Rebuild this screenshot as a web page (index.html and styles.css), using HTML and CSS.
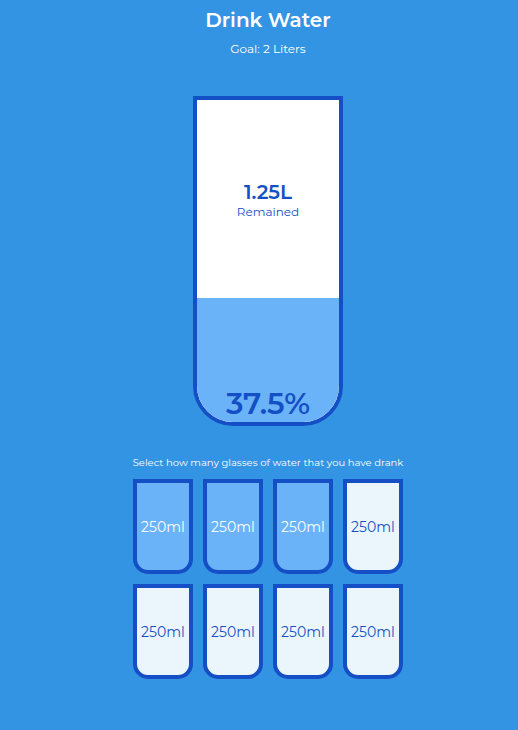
FILE: index.html
```html
<!DOCTYPE html>
<html lang="en">
<head>
<meta charset="UTF-8">
<meta name="viewport" content="width=device-width, initial-scale=1">
<title>Drink Water</title>
<link rel="stylesheet" href="styles.css">
</head>
<body>
<main class="tracker">
<h1 class="title">Drink Water</h1>
<h2 class="goal">Goal: 2 Liters</h2>
<section class="cup">
<div class="remained"><span class="liters">1.25L</span><small class="caption">Remained</small></div>
<div class="percentage">37.5%</div>
</section>
<p class="hint" id="hint">Select how many glasses of water that you have drank</p>
<div class="glasses" role="group" aria-labelledby="hint">
<button class="glass full" type="button">250ml</button>
<button class="glass full" type="button">250ml</button>
<button class="glass full" type="button">250ml</button>
<button class="glass" type="button">250ml</button>
<button class="glass" type="button">250ml</button>
<button class="glass" type="button">250ml</button>
<button class="glass" type="button">250ml</button>
<button class="glass" type="button">250ml</button>
</div>
</main>
</body>
</html>
```
FILE: styles.css
```css
:root {
  --border: #144fc6;
  --fill: #6ab3f8;
}

* {
  box-sizing: border-box;
}

body {
  margin: 0;
  background: #3494e4;
  color: #fff;
  font-family: Montserrat, Inter, sans-serif;
}

.tracker {
  display: flex;
  flex-direction: column;
  align-items: center;
  padding: 8px 0 50px 18px;
}

.title {
  margin: 0;
  font-size: 20px;
  line-height: 24px;
  font-weight: 600;
}

.goal {
  margin: 8px 0 38px;
  font-size: 12px;
  line-height: 18px;
  font-weight: 400;
}

.cup {
  display: flex;
  flex-direction: column;
  width: 150px;
  height: 330px;
  border: 4px solid var(--border);
  border-radius: 0 0 40px 40px;
  background: #fff;
  color: var(--border);
  overflow: hidden;
}

.remained {
  flex: 1;
  display: flex;
  flex-direction: column;
  align-items: center;
  justify-content: center;
  padding-top: 2px;
}

.liters {
  font-size: 20px;
  line-height: 24px;
  font-weight: 600;
}

.caption {
  font-size: 12px;
  line-height: 16px;
  font-weight: 400;
}

.percentage {
  display: flex;
  align-items: flex-end;
  justify-content: center;
  height: 124px;
  background: var(--fill);
  font-size: 30px;
  line-height: 36px;
  font-weight: 600;
}

.hint {
  margin: 28px 0 8px;
  font-size: 10px;
  line-height: 17px;
  font-weight: 400;
  text-align: center;
}

.glasses {
  display: grid;
  grid-template-columns: repeat(4, 60px);
  gap: 10px;
}

.glass {
  height: 95px;
  padding: 0;
  border: 4px solid var(--border);
  border-radius: 0 0 15px 15px;
  background: #ebf6fc;
  color: var(--border);
  font-family: inherit;
  font-size: 14px;
  font-weight: 400;
  cursor: pointer;
}

.full {
  background: var(--fill);
  color: #fff;
}
```
